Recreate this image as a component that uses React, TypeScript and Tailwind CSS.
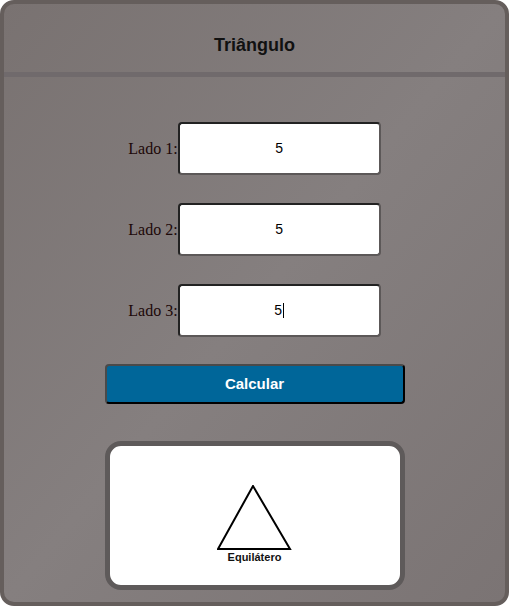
import React from "react";

const sides = ["Lado 1:", "Lado 2:", "Lado 3:"];

export default function App() {
  return (
    <div className="h-[606px] w-[509px] font-['Liberation_Sans',Arial,sans-serif]">
      <div className="flex h-full flex-col rounded-[14px] border-4 border-[#655e5c] bg-gradient-to-br from-[#797271] via-[#857f7f] to-[#7b7474]">
        <header className="h-[68px] pt-[31px] text-center text-[18px] font-bold leading-5 text-[#111]">
          Triângulo
        </header>
        <div className="h-[5px] bg-[#706a6c]" />

        <div className="mt-[45px] flex flex-col items-center gap-[28px]">
          {sides.map((label, i) => (
            <div key={label} className="flex items-center">
              <span className="font-['Liberation_Serif',serif] text-[16px] text-[#1c0808]">{label}</span>
              <div className="flex h-[53px] w-[203px] items-center justify-center rounded-[4px] border-2 border-b-[#5c5858] border-l-[#222] border-r-[#5c5858] border-t-[#222] bg-white text-[14px] text-black">
                5{i === 2 && <span className="ml-px inline-block h-[15px] w-px bg-black" />}
              </div>
            </div>
          ))}
        </div>

        <div className="mt-[27px] flex justify-center">
          <button className="h-[40px] w-[300px] rounded-[4px] border-2 border-b-black border-l-[#4a4a4a] border-r-black border-t-[#4a4a4a] bg-[#006699] text-[15px] font-bold text-white">
            Calcular
          </button>
        </div>

        <div className="mt-[37px] flex justify-center">
          <div className="flex h-[149px] w-[300px] flex-col items-center rounded-[16px] border-[5px] border-[#5e5a5a] bg-white pt-[39px]">
            <svg width="76" height="66" viewBox="0 0 76 66">
              <polygon points="36,1 1,64 73,64" fill="none" stroke="#000" strokeWidth="2" />
            </svg>
            <span className="text-[11px] font-bold leading-[13px] text-[#111]">Equilátero</span>
          </div>
        </div>
      </div>
    </div>
  );
}
